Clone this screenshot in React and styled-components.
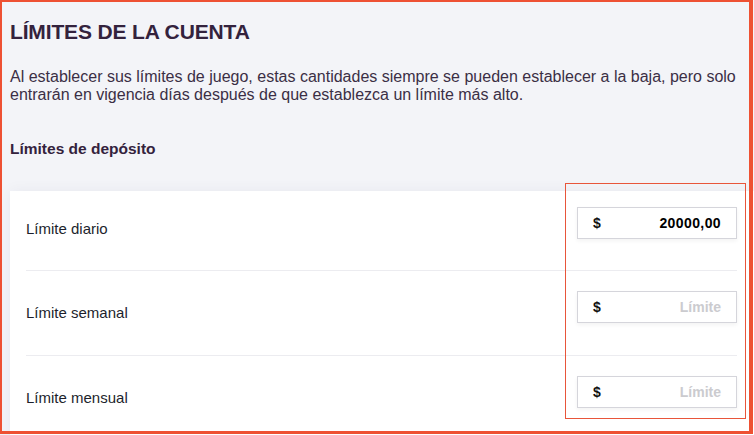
import React from "react";
import styled, { createGlobalStyle } from "styled-components";

const Global = createGlobalStyle`
  html, body { margin: 0; padding: 0; }
  body {
    background: #f3f4f8;
    font-family: "Liberation Sans", Arial, sans-serif;
    overflow: hidden;
  }
`;

const Page = styled.main`
  padding: 19px 0 0 10px;
  min-height: 435px;
  box-sizing: border-box;
`;

const Title = styled.h1`
  margin: 0;
  font-size: 21px;
  line-height: 26px;
  font-weight: 700;
  letter-spacing: -0.15px;
  color: #33223d;
`;

const Intro = styled.p`
  margin: 22.5px 0 0;
  font-size: 16px;
  line-height: 18px;
  color: #3b2f45;
  padding-right: 8px;
`;

const SubTitle = styled.h2`
  margin: 35px 0 0;
  font-size: 15.5px;
  line-height: 20px;
  font-weight: 700;
  color: #33223d;
`;

const Card = styled.section`
  margin-top: 32px;
  background: #fff;
  padding: 0 17px 0 16px;
  box-shadow: 0 0 14px rgba(30, 30, 70, 0.05);
`;

const Row = styled.div`
  display: flex;
  justify-content: space-between;
  align-items: flex-start;
  box-sizing: border-box;
  height: ${(p) => (p.$first ? 80 : 85)}px;
  padding-top: ${(p) => (p.$first ? 16 : 20)}px;
  border-bottom: 1px solid #ececf0;
`;

const Label = styled.span`
  margin-top: 12px;
  font-size: 15px;
  line-height: 20px;
  color: #1d1f2d;
`;

const InputBox = styled.label`
  display: flex;
  align-items: center;
  justify-content: space-between;
  box-sizing: border-box;
  width: 160px;
  height: 32px;
  padding: 0 15px;
  border: 1px solid #d5d5db;
  background: #fff;
  box-shadow: 0 2px 4px rgba(0, 0, 0, 0.05);
  font-size: 14px;
  font-weight: 700;
`;

const Currency = styled.span`
  color: #111;
`;

const Value = styled.span`
  color: ${(p) => (p.$empty ? "#cbcbcf" : "#000")};
  letter-spacing: ${(p) => (p.$empty ? "0" : "0.4px")};
`;

const Frame = styled.div`
  position: fixed;
  left: 0;
  top: 0;
  width: 753px;
  height: 434px;
  box-sizing: border-box;
  border-style: solid;
  border-color: #ee5133;
  border-width: 2px 4px 3px 2px;
  pointer-events: none;
`;

const Highlight = styled.div`
  position: fixed;
  left: 565px;
  top: 183px;
  width: 181px;
  height: 236px;
  box-sizing: border-box;
  border: 1px solid #e8553a;
  pointer-events: none;
`;

const limits = [
  { label: "Límite diario", value: "20000,00" },
  { label: "Límite semanal", value: "" },
  { label: "Límite mensual", value: "" },
];

export default function App() {
  return (
    <>
      <Global />
      <Page>
        <Title>LÍMITES DE LA CUENTA</Title>
        <Intro>
          Al establecer sus límites de juego, estas cantidades siempre se pueden
          establecer a la baja, pero solo entrarán en vigencia días después de
          que establezca un límite más alto.
        </Intro>
        <SubTitle>Límites de depósito</SubTitle>
        <Card>
          {limits.map((l, i) => (
            <Row key={l.label} $first={i === 0}>
              <Label>{l.label}</Label>
              <InputBox>
                <Currency>$</Currency>
                <Value $empty={!l.value}>{l.value || "Límite"}</Value>
              </InputBox>
            </Row>
          ))}
        </Card>
      </Page>
      <Highlight />
      <Frame />
    </>
  );
}
